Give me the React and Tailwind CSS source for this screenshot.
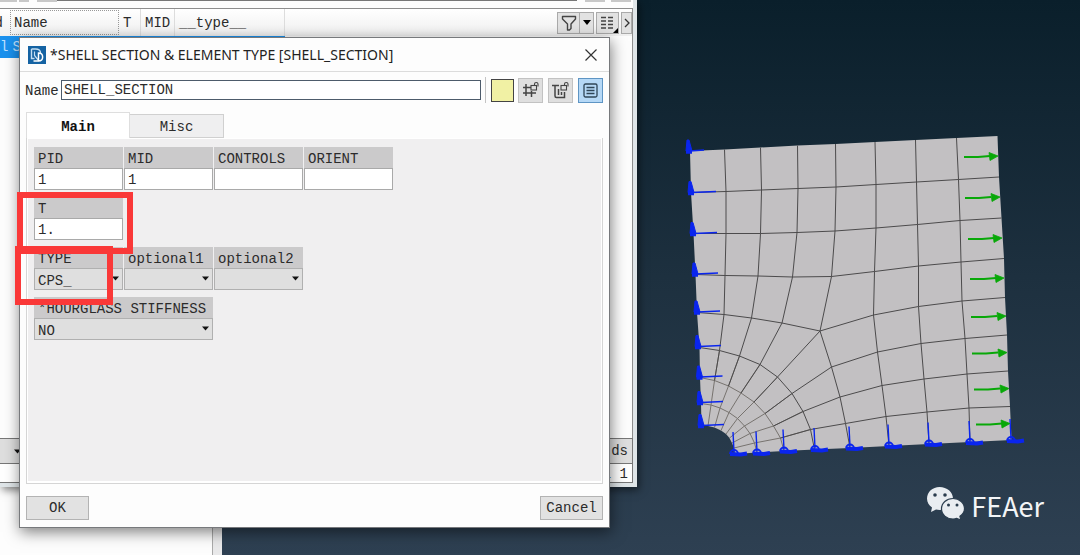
import React from 'react';

// Mesh nodes, in the coordinates of the viewport drawing
const GRID = [
  [[690, 151], [724.5, 149.5], [760.5, 147.5], [797.5, 145.5], [835.5, 144], [875, 142], [915.5, 140], [956.5, 138], [997.5, 136]],
  [[691, 192.5], [726, 191.5], [761.5, 190], [798, 188.5], [836, 187], [876, 184.5], [916.5, 182], [958.5, 179.5], [999, 177]],
  [[693.5, 233.5], [726, 233.5], [760.5, 233.5], [797, 232.5], [835, 231], [876, 228], [917.5, 224.5], [960, 220.5], [1001.5, 218]],
  [[695.5, 274.5], [725, 275.5], [758, 276], [792.5, 277], [831.5, 276.5], [874.5, 271.5], [918.5, 266], [961, 262], [1004, 258.5]],
  [[697, 312.5], [724, 314.5], [751.5, 318], [782, 323], [820, 331], [873.5, 315], [918.5, 306.5], [962, 301], [1005, 297.5]],
];

const LOWER = [
  [[820, 331], [873.5, 315], [918.5, 306.5], [962, 301], [1005, 297.5]],
  [[831.5, 367], [877.5, 352], [921, 343.5], [965, 338.5], [1007, 335]],
  [[840, 397], [882, 385.5], [924, 379], [967, 374], [1008, 371]],
  [[845.5, 423.5], [886, 416.5], [927, 412], [969, 408], [1010, 406.5]],
  [[850, 448], [889, 446], [929, 444], [970, 442], [1011.5, 440]],
];

const RINGS = [
  [[697, 312.5], [724, 314.5], [751.5, 318], [782, 323], [820, 331], [831.5, 367], [840, 397], [845.5, 423.5], [850, 448]],
  [[699.5, 347.5], [719.5, 350.5], [739.5, 356], [760, 364.5], [777.5, 377], [792, 393.5], [803, 411.5], [810.5, 429.5], [814.5, 449.5]],
  [[700, 377.5], [714.5, 380.5], [728.5, 386], [741, 393], [754, 402], [765, 413.5], [773.5, 426], [780.5, 438], [784, 451]],
  [[701, 403.5], [711, 405], [720, 408], [729, 412.5], [737.5, 418.5], [744.5, 426], [750, 433.5], [754.5, 443], [757, 452.5]],
  [[701.5, 425.5], [708, 426], [714.5, 427.5], [721, 430.5], [726, 434], [729.5, 438], [732, 443], [734, 448], [735, 454]],
];

const LEFT_PINS = [
  [690, 151, 14], [692, 192.5, 24], [694, 233.5, 23], [696, 274, 22], [698, 312, 22],
  [699, 346.5, 22], [700.5, 377, 22], [701, 402.5, 22], [702, 425.5, 22],
];

const BOTTOM_PINS = [
  [734, 453], [757, 452.5], [784, 450.5], [815, 449], [850, 447.5], [889, 445.5], [929, 443.5], [970, 442], [1011, 440],
];

const ARROWS = [
  [964, 998, 156.5], [965, 1000, 197.5], [968, 1002, 238.5], [970, 1004, 278.5],
  [971, 1006, 316.5], [972, 1007, 353], [974, 1009, 389], [976, 1010, 424],
];

const points = (nodes) => nodes.map((n) => n.join(',')).join(' ');
const column = (rows, i) => rows.map((r) => r[i]);

const OUTLINE = [
  ...GRID[0],
  ...column(GRID, 8),
  ...column(LOWER, 4),
  ...[...LOWER[4]].reverse(),
  ...column(RINGS, 8),
  ...[...RINGS[4]].reverse(),
  ...column(RINGS, 0).reverse(),
  ...column(GRID, 0).reverse(),
];

function Mesh() {
  return (
    <svg className="absolute left-[680px] top-[130px]" width="350" height="340" viewBox="680 130 350 340" fill="none">
      <polygon points={points(OUTLINE)} fill="#c2c0c2" />
      <g stroke="#4c4b4c" strokeWidth="1">
        {GRID.slice(1).map((r, i) => <polyline key={i} points={points(r)} />)}
        {[1, 2, 3, 4, 5, 6, 7].map((i) => <polyline key={i} points={points(column(GRID, i))} />)}
        {LOWER.slice(1, 4).map((r, i) => <polyline key={i} points={points(r)} />)}
        {[0, 1, 2, 3].map((i) => <polyline key={i} points={points(column(LOWER, i))} />)}
        <polyline points={points(RINGS[1])} />
      </g>
      <g stroke="#77736f" strokeWidth="1">
        {RINGS.slice(2, 4).map((r, i) => <polyline key={i} points={points(r)} />)}
        {[1, 2, 3, 4, 5, 6, 7].map((i) => <polyline key={i} points={points(column(RINGS, i).slice(1))} />)}
      </g>
      <g stroke="#4c4b4c" strokeWidth="1">
        {[1, 2, 3, 4, 5, 6, 7].map((i) => <polyline key={i} points={points(column(RINGS, i).slice(0, 3))} />)}
      </g>

      {/* Constraints */}
      <g stroke="#0a25ee" fill="#0a25ee">
        {LEFT_PINS.map(([x, y, w]) => (
          <g key={y}>
            <path d={`M${x - 3} ${y - 11}h2l3 11h-6z`} strokeWidth="1" />
            <path d={`M${x - 4} ${y + 1}h6`} strokeWidth="3.5" />
            <path d={`M${x} ${y}l${w} -1`} strokeWidth="1.3" />
          </g>
        ))}
        {BOTTOM_PINS.map(([x, y]) => (
          <g key={x}>
            <path d={`M${x - 1} ${y - 21}l1 20`} strokeWidth="1.4" />
            <path d={`M${x - 4} ${y + 1}a4 4 0 0 1 8 0`} strokeWidth="1.8" fill="none" />
            <path d={`M${x - 4} ${y + 1}l11 0.500l6 -1`} strokeWidth="4" fill="none" />
          </g>
        ))}
      </g>

      {/* Loads */}
      {ARROWS.map(([x1, x2, y]) => (
        <g key={y} stroke="#08a808" fill="#08a808">
          <path d={`M${x1} ${y + 0.5}h14l12 -1`} fill="none" strokeWidth="1.8" />
          <path d={`M${x2 - 9} ${y - 4}l9 3.5l-8 4.5z`} strokeWidth="0.8" />
        </g>
      ))}
    </svg>
  );
}

function Caret({ className = '' }) {
  return (
    <svg className={className} width="7" height="5" viewBox="0 0 7 5">
      <path d="M0 0.5h7L3.5 4.5z" fill="#111" />
    </svg>
  );
}

function Field({ id, label, value = '' }) {
  return (
    <div className="w-[89px] flex flex-col">
      <label htmlFor={id} className="h-[21px] px-1 leading-6 bg-[#cbcacb] whitespace-pre">{label}</label>
      <input id={id} defaultValue={value} className="h-[22px] w-full px-[3px] pt-0.5 bg-white border border-[#a9a9a9] outline-none" />
    </div>
  );
}

function Select({ id, label, value = '', width = 'w-[89px]' }) {
  return (
    <div className={`${width} flex flex-col`}>
      <label htmlFor={id} className="h-[21px] px-1 leading-6 bg-[#cbcacb] whitespace-pre">{label}</label>
      <div className="relative">
        <select id={id} defaultValue={value} className="block appearance-none h-[22px] w-full px-[3px] pt-0.5 bg-[#dfdfdf] border border-[#b0b0b0] outline-none">
          <option>{value}</option>
        </select>
        <Caret className="absolute right-1 top-2 pointer-events-none" />
      </div>
    </div>
  );
}

const ICON_BUTTON = 'w-[25px] h-[25px] flex items-center justify-center border';

function BrowserWindow() {
  return (
    <section className="absolute left-0 top-0 w-[637px] h-[487px] flex flex-col bg-[#fdfdfd] border-r-4 border-b-4 border-[#dfe5e8] shadow-[2px_3px_8px_rgba(0,0,0,0.5)]">
      <div className="h-[9px] flex items-start border-b border-[#8e8e8e]">
        <div className="w-[17px] h-0.5 bg-[#c8c8c8]" />
        <div className="ml-0.5 w-2.5 h-0.5 bg-[#c8c8c8] mr-2" />
        <div className="w-5 h-0.5 bg-[#c8c8c8]" />
        <div className="flex-1 h-px bg-[#777] mr-2" />
        <div className="w-5 h-0.5 bg-[#c8c8c8] mr-1.5" />
        <div className="w-5 h-0.5 bg-[#c8c8c8] mr-0.5" />
      </div>
      <div className="h-[27px] flex items-center bg-gradient-to-b from-[#fff] to-[#f0f0f0] border-r border-[#8e8e8e]">
        <span className="w-2.5 flex justify-end overflow-hidden pr-[7px]">d</span>
        <span className="w-[109px] h-[25px] px-[3px] leading-[25px] border border-dotted border-[#999]">Name</span>
        <span className="w-[22px] h-full pl-1 leading-7 border-r border-[#ddd]">T</span>
        <span className="w-[34px] h-full pl-1 leading-7 border-r border-[#ddd]">MID</span>
        <span className="w-[110px] h-full pl-1 leading-7 border-r border-[#ddd]">__type__</span>
        <div className="ml-auto flex items-center">
          <button aria-label="Filter" className="w-[23px] h-[22px] flex items-center justify-center bg-[#e2e2e2] border border-[#aaa]">
            <svg width="16" height="16" viewBox="0 0 16 16" fill="none" stroke="#444" strokeWidth="1.4">
              <path d="M1.5 1.5h13v2.5L10 9v4.5L8.500 15H6.500V9L1.500 4z" strokeLinejoin="round" />
            </svg>
          </button>
          <button aria-label="Filter options" className="w-[14px] h-[22px] flex items-center justify-center bg-[#e2e2e2] border border-l-0 border-[#aaa]">
            <svg width="8" height="5" viewBox="0 0 8 5"><path d="M0 0h8L4 5z" fill="#000" /></svg>
          </button>
          <button aria-label="Columns" className="ml-0.5 w-[23px] h-[22px] flex items-center justify-center bg-[#e2e2e2] border border-[#aaa]">
            <svg width="21" height="20" viewBox="0 0 21 20" fill="none" stroke="#444" strokeWidth="1.3">
              <path d="M4 4.500h5M11 4.500h5M4 8h5M11 8h5M4 11.500h5M11 11.500h5M4 15h5M11 15h5" />
              <path d="M21 15v5h-5z" fill="#000" stroke="none" />
            </svg>
          </button>
          <button aria-label="More" className="ml-0.5 w-[11px] h-[22px] flex items-center justify-center bg-[#e2e2e2] border border-[#aaa]">
            <svg width="6" height="10" viewBox="0 0 6 10" fill="none" stroke="#333" strokeWidth="1.3"><path d="M1 1l4 4-4 4" /></svg>
          </button>
        </div>
      </div>
      <div className="flex-1 border-r border-[#8e8e8e]">
        <div className="w-[285px] h-[22px] leading-[22px] flex gap-1 bg-[#1a91ee] text-[#bfe0ff]">
          <span>l</span>
          <span>S</span>
        </div>
      </div>
      <div className="h-[26px] flex items-center justify-between border-y border-r border-[#777] bg-[#dedede]">
        <Caret className="ml-[14px]" />
        <span className="pr-1">ds</span>
      </div>
      <div className="h-[19px] pr-1 pt-0.5 flex items-center justify-end border-b border-r border-[#777] bg-white whitespace-pre">l 1</div>
    </section>
  );
}

function SectionDialog() {
  return (
    <section className="absolute left-[19px] top-[37px] w-[591px] flex flex-col bg-[#fdfdfd] border border-[#77797c] shadow-[1px_4px_14px_rgba(0,0,0,0.5)]">
      <header className="h-[34px] px-2 flex items-center border-b border-[#dcdcdc]">
        <svg width="18" height="18" viewBox="0 0 18 18" fill="none">
          <rect width="18" height="18" fill="#1563a3" />
          <path d="M3.500 3v9.500h3M3.500 3h4c3.500 0 5 2 5 4" stroke="#c4def2" strokeWidth="1.4" />
          <path d="M6.500 5.500v4l4.500 5.500" stroke="#c4def2" strokeWidth="1.2" />
          <path d="M5.500 15h5c5.500 0 5.500-8 0-8v8" stroke="#fff" strokeWidth="1.5" />
        </svg>
        <h1 className="ml-1 font-['Noto_Sans','Open_Sans',sans-serif] text-[14px] text-[#222]">
          *SHELL SECTION &amp; ELEMENT TYPE [SHELL_SECTION]
        </h1>
        <button aria-label="Close" className="ml-auto mr-1">
          <svg width="12" height="12" viewBox="0 0 12 12" stroke="#333" strokeWidth="1.2"><path d="M0.500 0.500l11 11M11.500 0.500l-11 11" /></svg>
        </button>
      </header>

      <div className="flex items-center pl-[5px] pr-1.5 pt-[5px]">
        <label htmlFor="name" className="w-9 pt-0.5">Name</label>
        <input id="name" defaultValue="SHELL_SECTION" autoFocus className="flex-1 min-w-0 h-5 px-0.5 bg-white border border-[#4d5b6b] outline-none" />
        <div className="ml-1 mr-[5px] w-px h-[26px] bg-[#c4c4c4]" />
        <button aria-label="Color" className="w-[23px] h-[23px] bg-[#f1f1a4] border border-[#444] mr-1" />
        <button aria-label="Unlock id" className={`${ICON_BUTTON} bg-[#dfdfdf] border-[#c2c2c2] mr-[5px]`}>
          <svg width="19" height="19" viewBox="0 0 19 19" fill="none" stroke="#444" strokeWidth="1.5">
            <path d="M5 3v12M2 6.500h8M2 12h13M10.500 10v6" />
            <rect x="10" y="4.500" width="5.500" height="4.500" strokeWidth="1.1" />
            <path d="M13.500 4.500V3c0-2 3.500-2 3.500 0v2.500" strokeWidth="1.1" />
          </svg>
        </button>
        <button aria-label="Unlock cards" className={`${ICON_BUTTON} bg-[#dfdfdf] border-[#c2c2c2] mr-[5px]`}>
          <svg width="19" height="19" viewBox="0 0 19 19" fill="none" stroke="#444" strokeWidth="1.5">
            <path d="M1 4.500h7M4 4.500v10.500c0 1 .500 1.500 1.500 1.500h8V11M7.500 8v6M10.500 11v3" />
            <rect x="10" y="4.500" width="5.500" height="4.500" strokeWidth="1.1" />
            <path d="M13.500 4.500V3c0-2 3.500-2 3.500 0v2.500" strokeWidth="1.1" />
          </svg>
        </button>
        <button aria-label="Card view" className={`${ICON_BUTTON} bg-[#b5d8f6] border-[#5e95c4]`}>
          <svg width="15" height="15" viewBox="0 0 15 15" fill="none" stroke="#2f4557" strokeWidth="1.3">
            <rect x="1" y="1" width="13" height="13" rx="1.500" />
            <path d="M3.500 4.500h8M3.500 7.500h8M3.500 10.500h8" />
          </svg>
        </button>
      </div>

      {/* Tabs */}
      <div className="mx-1.5 mt-[9px] flex items-end">
        <button className="w-[104px] h-[26px] pt-0.5 bg-white border border-b-0 border-[#dedede] font-bold text-[#111]">Main</button>
        <button className="w-[94px] h-6 pt-0.5 bg-[#efeff0] border border-l-0 border-[#d0d0d0]">Misc</button>
      </div>
      <div className="mx-1.5 h-[346px] p-px pb-0.5 bg-white border border-t-0 border-[#d5d5d5]">
        <div className="h-full px-1.5 pt-2 bg-[#f0eff0] flex flex-col gap-[7px]">
          <div className="flex gap-px">
            <Field id="pid" label="PID" value="1" />
            <Field id="mid" label="MID" value="1" />
            <Field id="controls" label="CONTROLS" />
            <Field id="orient" label="ORIENT" />
          </div>
          <Field id="t" label="T" value="1." />
          <div className="flex gap-px">
            <Select id="type" label="TYPE" value="CPS_" />
            <Select id="optional1" label="optional1" />
            <Select id="optional2" label="optional2" />
          </div>
          <Select id="hourglass" label="*HOURGLASS STIFFNESS" value="NO" width="w-[179px]" />
        </div>
      </div>

      <footer className="mx-1.5 pt-3 pb-[7px] flex justify-between">
        <button className="w-[63px] h-6 bg-[#e2e2e2] border border-[#b3b3b3]">OK</button>
        <button className="w-[63px] h-6 bg-[#e2e2e2] border border-[#b3b3b3]">Cancel</button>
      </footer>
    </section>
  );
}

export default function App() {
  return (
    <main className="relative min-h-screen overflow-hidden flex bg-gradient-to-b from-[#0a1f2b] via-[#1d303f] to-[#2e4052] font-['Liberation_Mono','Noto_Sans_CJK_SC',monospace] text-[14px] leading-5 text-[#2b2b2b]">
      <aside className="w-[222px] bg-[#fdfdfd] border-r-[9px] border-[#e9e9ea]">
        <div className="w-full min-h-screen border-r border-[#aaa]" />
      </aside>

      <Mesh />
      <BrowserWindow />
      <SectionDialog />

      {/* Highlights */}
      <div className="absolute left-[17px] top-[192px] w-[116px] h-[62px] border-[6px] border-[#fa3838] pointer-events-none" />
      <div className="absolute left-[15px] top-[246px] w-[98px] h-[59px] border-[6px] border-[#fa3838] pointer-events-none" />

      <div className="absolute right-9 bottom-[29px] flex items-center gap-1.5 font-['Noto_Sans_CJK_SC',sans-serif] text-[27px] leading-9 text-[#f3f5f7]">
        <svg width="39" height="34" viewBox="0 0 39 34" className="mb-1.5">
          <path d="M13.500 1C6.500 1 1 6 1 12.500c0 4 2 7 5 9L5 26l5-2.500c1.200.3 2.400.5 3.500.5C21 24 27 19 27 12.500S21 1 13.500 1z" fill="#e9edf1" />
          <path d="M27 12.500c-6.500 0-11.500 4.500-11.500 10.300S20.500 33 27 33c1.200 0 2.500-.2 3.700-.6l4.200 1.600-1-3.800c3-2 4.600-4.500 4.600-7.400 0-5.800-5-10.300-11.500-10.300z" fill="#e9edf1" stroke="#2b3d4e" strokeWidth="1.200" />
          <g fill="#2b3d4e">
            <circle cx="9" cy="9" r="1.800" />
            <circle cx="19" cy="9" r="1.800" />
            <circle cx="22.500" cy="19" r="1.500" />
            <circle cx="31" cy="19" r="1.500" />
          </g>
        </svg>
        <span>FEAer</span>
      </div>
    </main>
  );
}
